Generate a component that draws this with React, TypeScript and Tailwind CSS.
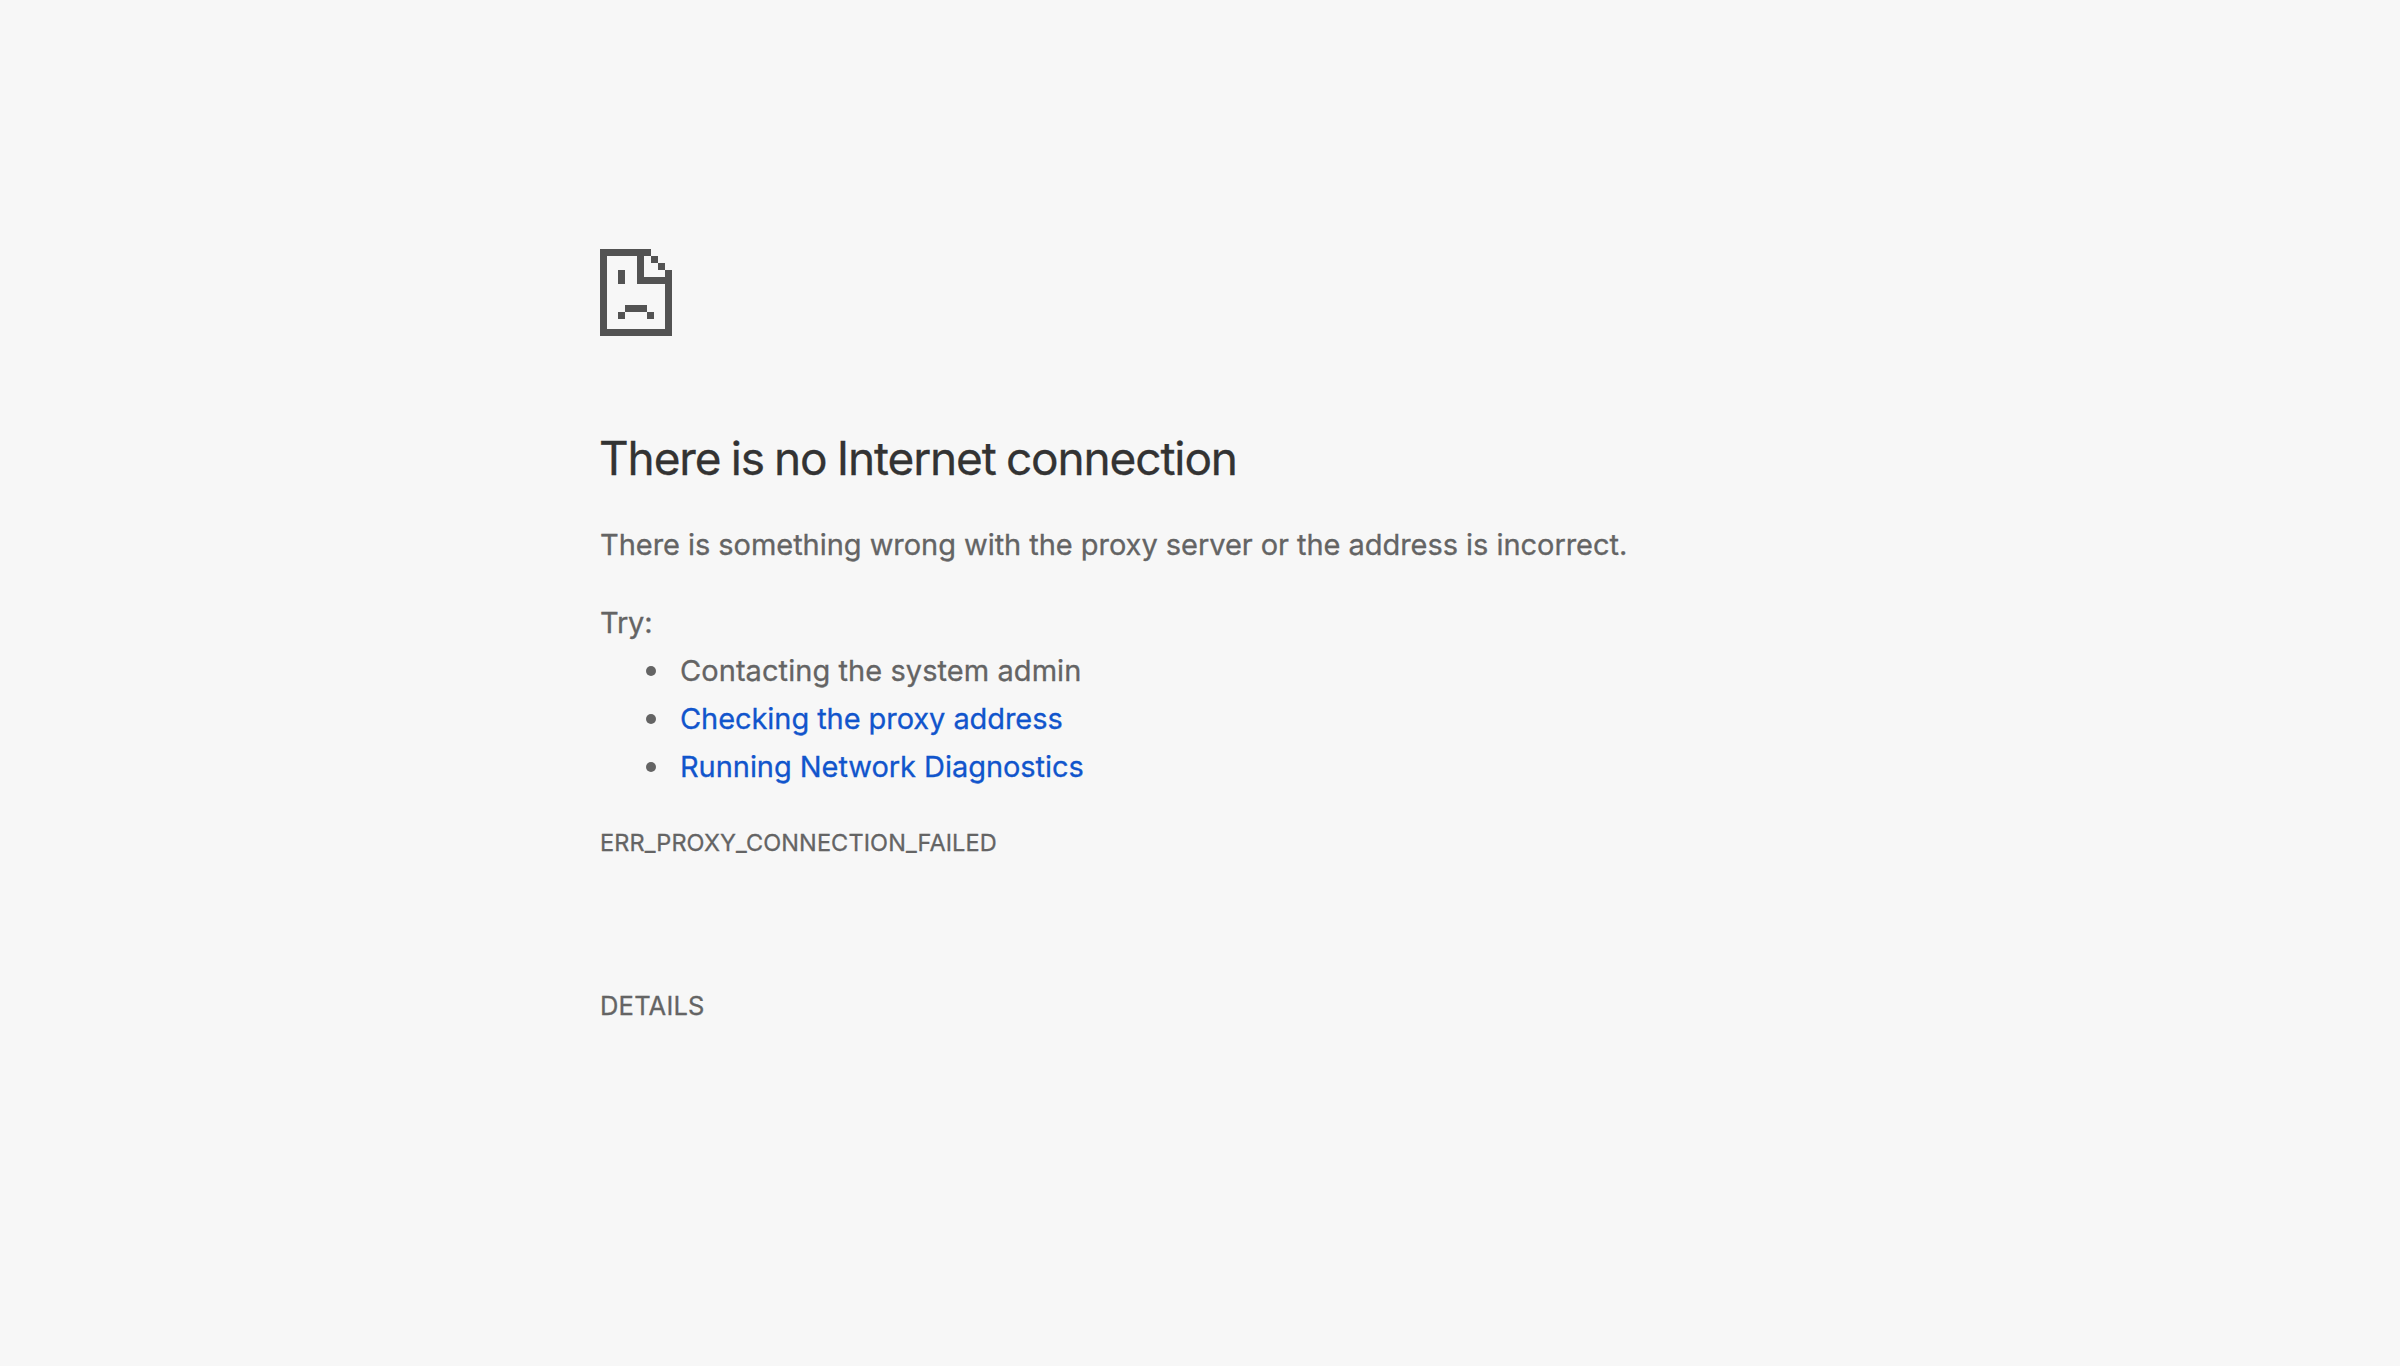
function SadPageIcon() {
  return (
    <svg
      width="72"
      height="87"
      viewBox="0 0 72 87"
      fill="#535353"
      shapeRendering="crispEdges"
      aria-hidden="true"
      className="block"
    >
      {/* page outline with the folded corner */}
      <path d="M0 0H51V7H44V28H65V21H72V87H0ZM7 7V80H65V35H37V7Z" fillRule="evenodd" />
      <rect x="51" y="7" width="7" height="7" />
      <rect x="58" y="14" width="7" height="7" />
      {/* eye */}
      <rect x="18" y="21" width="7" height="14" />
      {/* mouth */}
      <rect x="25" y="56" width="22" height="7" />
      <rect x="18" y="63" width="7" height="7" />
      <rect x="47" y="63" width="7" height="7" />
    </svg>
  );
}

const suggestions = [
  { text: 'Contacting the system admin', link: false, tracking: 'tracking-[0.065px]' },
  { text: 'Checking the proxy address', link: true, tracking: 'tracking-[-0.07px]' },
  { text: 'Running Network Diagnostics', link: true, tracking: 'tracking-[-0.05px]' },
];

export default function App() {
  return (
    <div className="min-h-screen bg-[#f7f7f7] font-['Inter',sans-serif] text-[#646464] [-webkit-text-stroke:0.3px]">
      <main className="mx-auto w-[1200px] pt-[249px]">
        <SadPageIcon />
        <h1 className="mt-[94px] -ml-px text-[46px] leading-[56px] font-normal tracking-[-1.13px] text-[#333] [word-spacing:-1.6px]">
          There is no Internet connection
        </h1>
        <p className="mt-[35px] text-[29px] leading-[48px] tracking-[-0.046px] whitespace-nowrap">
          There is something wrong with the proxy server or the address is incorrect.
        </p>
        <div className="mt-[30px] text-[29px] leading-[48px]">
          <p className="tracking-[-0.2px]">Try:</p>
          <ul>
            {suggestions.map((s) => (
              <li key={s.text} className="flex h-12 items-center pl-[46px]">
                <span className="mr-6 size-2.5 shrink-0 rounded-full bg-[#646464]" />
                {s.link ? (
                  <a href="#" className={`text-[#1155cc] ${s.tracking}`}>
                    {s.text}
                  </a>
                ) : (
                  <span className={s.tracking}>{s.text}</span>
                )}
              </li>
            ))}
          </ul>
        </div>
        <div className="mt-[37px] text-[23.5px] leading-[29px] tracking-[0.1px]">
          ERR_PROXY_CONNECTION_FAILED
        </div>
        <button className="mt-[133px] block text-[25.5px] leading-[31px] tracking-[0.2px]">
          DETAILS
        </button>
      </main>
    </div>
  );
}
